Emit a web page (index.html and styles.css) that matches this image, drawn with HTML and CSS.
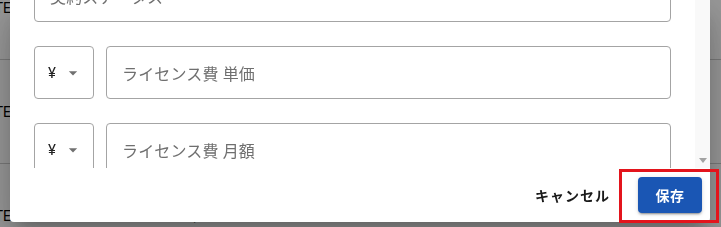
FILE: index.html
```html
<!DOCTYPE html>
<html lang="ja">
<head>
<meta charset="utf-8">
<link rel="stylesheet" href="styles.css">
</head>
<body>
<div class="page">
  <div class="rows">
    <div class="row"><span class="c1">STATE</span><span class="c2">10,000</span><span class="c3">1</span></div>
    <div class="row"><span class="c1">STATE</span><span class="c2">10,000</span><span class="c3">1</span></div>
    <div class="row"><span class="c1">STATE</span><span class="c2">10,000</span><span class="c3">1</span></div>
  </div>
</div>
<div class="backdrop"></div>
<div class="dialog">
  <div class="body">
    <div class="scroll">
      <div class="fields">
        <div class="field"><span class="ph">契約ステータス</span></div>
        <div class="money-row">
          <div class="field currency"><span class="yen">¥</span><svg class="caret" viewBox="0 0 24 24" width="20" height="20"><path d="M7 10l5 5 5-5z"/></svg></div>
          <div class="field grow"><span class="ph">ライセンス費 単価</span></div>
        </div>
        <div class="money-row">
          <div class="field currency"><span class="yen">¥</span><svg class="caret" viewBox="0 0 24 24" width="20" height="20"><path d="M7 10l5 5 5-5z"/></svg></div>
          <div class="field grow"><span class="ph">ライセンス費 月額</span></div>
        </div>
      </div>
    </div>
    <div class="scrollbar">
      <div class="sb-btn"><svg viewBox="0 0 8 5" width="8" height="5"><path d="M0 0h8L4 5z"/></svg></div>
    </div>
  </div>
  <div class="actions">
    <button class="btn-text">キャンセル</button>
    <button class="btn-primary">保存</button>
  </div>
</div>
<div class="highlight"></div>
</body>
</html>
```
FILE: styles.css
```css
html, body {
  margin: 0;
  padding: 0;
  width: 721px;
  height: 227px;
  overflow: hidden;
  background: #fff;
  font-family: Roboto, "Noto Sans CJK JP", "Noto Sans", sans-serif;
}

.page {
  height: 227px;
  overflow: hidden;
}

.rows {
  margin-top: -44px;
}

.row {
  height: 104px;
  border-bottom: 1px solid #ccc;
  box-sizing: border-box;
  display: flex;
  align-items: center;
  font-size: 14px;
  color: #000;
}

.c1 {
  width: 11px;
  display: flex;
  justify-content: flex-end;
  white-space: nowrap;
}

.c2 {
  margin-left: 167px;
  width: 200px;
}

.c3 {
  margin-left: 7px;
}

.backdrop {
  position: fixed;
  inset: 0;
  background: rgba(0, 0, 0, 0.4);
}

.dialog {
  position: fixed;
  left: 10px;
  top: 0;
  width: 700px;
  height: 222px;
  background: #fff;
  border-radius: 0 0 4px 4px;
  display: flex;
  flex-direction: column;
  box-shadow: 0 11px 15px -7px rgba(0,0,0,.2), 0 24px 38px 3px rgba(0,0,0,.14), 0 9px 46px 8px rgba(0,0,0,.12);
}

.body {
  height: 168px;
  display: flex;
}

.scroll {
  flex: 1;
  overflow: hidden;
  padding: 0 24px;
}

.fields {
  margin-top: -31px;
  display: flex;
  flex-direction: column;
  gap: 24px;
}

.field {
  height: 53px;
  box-sizing: border-box;
  border: 1px solid #a4a4a4;
  border-radius: 4px;
  display: flex;
  align-items: center;
  padding: 0 15px;
}

.ph {
  font-size: 16px;
  letter-spacing: 0.15px;
  color: #6f6f6f;
}

.money-row {
  display: flex;
  gap: 12px;
}

.currency {
  width: 60px;
  flex: none;
  padding: 0 0 0 13px;
}

.yen {
  font-size: 15px;
  color: #222;
  width: 9px;
}

.caret {
  fill: #707070;
  margin-left: 6px;
}

.grow {
  flex: 1;
}

.scrollbar {
  width: 15px;
  background: #f9f9f9;
  display: flex;
  flex-direction: column;
  justify-content: flex-end;
}

.sb-btn {
  height: 15px;
  display: flex;
  align-items: center;
  justify-content: center;
}

.sb-btn svg {
  fill: #a3a3a3;
}

.actions {
  height: 54px;
  display: flex;
  align-items: center;
  justify-content: flex-end;
  padding-right: 8px;
  gap: 20px;
}

button {
  font-family: Roboto, "Noto Sans CJK JP", sans-serif;
  font-size: 14px;
  font-weight: 700;
  letter-spacing: 1px;
  border: none;
  cursor: pointer;
}

.btn-text {
  background: transparent;
  color: #1a1a1a;
  padding: 6px 8px;
}

.btn-primary {
  width: 64px;
  height: 36px;
  background: #1a56b4;
  color: #fff;
  border-radius: 4px;
  padding: 0;
  letter-spacing: 0.4px;
  box-shadow: 0 3px 1px -2px rgba(0,0,0,.2), 0 2px 2px rgba(0,0,0,.14), 0 1px 5px rgba(0,0,0,.12);
}

.highlight {
  position: fixed;
  left: 619px;
  top: 169px;
  width: 100px;
  height: 54px;
  box-sizing: border-box;
  border: 3px solid #e3141c;
}
```
